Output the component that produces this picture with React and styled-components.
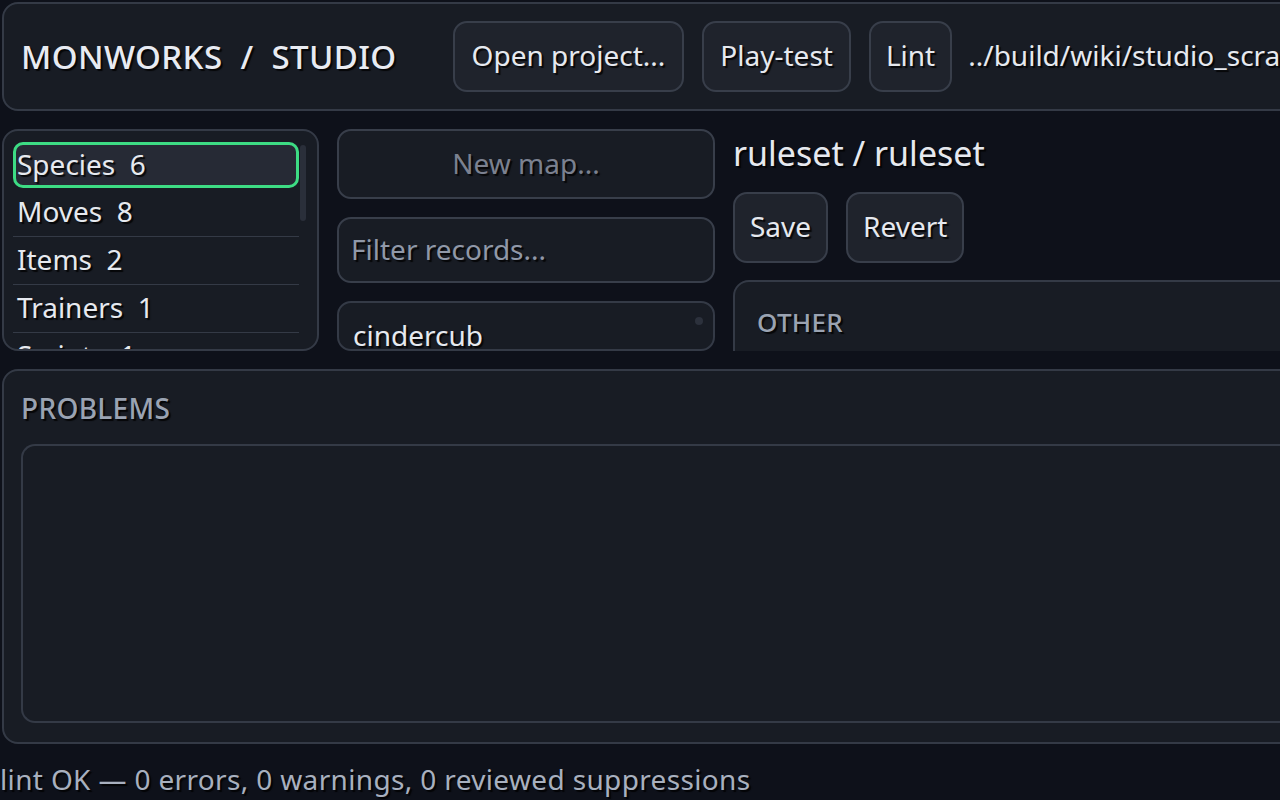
import React from 'react';
import styled, { createGlobalStyle } from 'styled-components';

const Global = createGlobalStyle`
  html, body {
    margin: 0;
    padding: 0;
    background: #0e111a;
    overflow: hidden;
  }
  body {
    font-family: "Noto Sans", "Open Sans", sans-serif;
    color: #e6e9ef;
  }
`;

const Page = styled.div`
  width: 1500px;
  height: 800px;
  display: flex;
  flex-direction: column;
  gap: 18px;
  padding: 2px 0 0 2px;
  box-sizing: border-box;
  text-shadow: 2px 2px 1px rgba(0, 0, 0, 0.8);
`;

const Panel = styled.div`
  background: #181c24;
  border: 2px solid #343a46;
  border-radius: 16px;
  box-sizing: border-box;
`;

const Header = styled(Panel)`
  height: 109px;
  flex: none;
  display: flex;
  align-items: center;
  gap: 18px;
  padding: 0 17px;
`;

const Title = styled.div`
  font-size: 33px;
  font-weight: 500;
  letter-spacing: 0.4px;
  white-space: pre;
  margin-right: 38px;
  color: #e8ebf2;
`;

const Button = styled.button`
  font-family: inherit;
  font-size: 28px;
  color: ${p => (p.disabled ? '#7b8190' : '#e6e9ef')};
  text-shadow: inherit;
  background: ${p => (p.disabled ? '#181c24' : '#1f232c')};
  border: 2px solid #383e4a;
  border-radius: 14px;
  height: ${p => p.h || 71}px;
  padding: 0 ${p => p.pad || 15}px 3px;
  cursor: pointer;
  box-sizing: border-box;
  white-space: nowrap;
`;

const PathText = styled.div`
  font-size: 28px;
  white-space: nowrap;
  margin-left: -2px;
  padding-bottom: 3px;
`;

const Main = styled.div`
  height: 222px;
  flex: none;
  display: flex;
  gap: 18px;
  overflow: hidden;
`;

const ListPanel = styled(Panel)`
  width: 317px;
  height: 222px;
  flex: none;
  position: relative;
  overflow: hidden;
  padding: 11px 18px 0 9px;
`;

const Category = styled.div`
  height: 48px;
  display: flex;
  align-items: center;
  font-size: 28px;
  white-space: pre;
  box-sizing: border-box;
  padding: 0 0 4px 4px;
  border-bottom: 1px solid #343a46;
  ${p =>
    p.selected &&
    `
    background: #262a35;
    border: 3px solid #3ddc84;
    border-radius: 10px;
    height: 46px;
    margin-bottom: 1px;
    padding: 0 0 3px 1px;
  `}
`;

const Scrollbar = styled.div`
  position: absolute;
  right: 11px;
  top: 14px;
  width: 6px;
  height: 76px;
  border-radius: 3px;
  background: #2a2f3a;
`;

const MiddleCol = styled.div`
  width: 378px;
  flex: none;
  display: flex;
  flex-direction: column;
  gap: 18px;
`;

const FilterInput = styled.input`
  font-family: inherit;
  font-size: 28px;
  height: 66px;
  background: #181c24;
  border: 2px solid #383e4a;
  border-radius: 14px;
  color: #e6e9ef;
  padding: 0 12px 2px;
  box-sizing: border-box;
  outline: none;
  text-shadow: 2px 2px 1px rgba(0, 0, 0, 0.8);
  &::placeholder {
    color: #9098a8;
  }
`;

const RecordList = styled(Panel)`
  flex: 1;
  border-radius: 14px;
  position: relative;
  overflow: hidden;
  padding: 12px 14px 0;
`;

const Record = styled.div`
  font-size: 28px;
  line-height: 40px;
`;

const Dot = styled.div`
  position: absolute;
  right: 10px;
  top: 14px;
  width: 8px;
  height: 8px;
  border-radius: 50%;
  background: #2c313c;
`;

const RightCol = styled.div`
  flex: 1;
  display: flex;
  flex-direction: column;
`;

const RecordTitle = styled.div`
  font-size: 34px;
  line-height: 48px;
  margin: 0 0 15px;
`;

const ButtonRow = styled.div`
  display: flex;
  gap: 18px;
  margin-bottom: 17px;
`;

const Section = styled(Panel)`
  padding: 22px 22px;
  height: 200px;
  flex: none;
`;

const SectionLabel = styled.div`
  font-size: ${p => p.size || 26}px;
  font-weight: 500;
  color: #9aa3b2;
  letter-spacing: 0.3px;
`;

const Problems = styled(Panel)`
  height: 375px;
  flex: none;
  padding: 18px 0 19px 17px;
  display: flex;
  flex-direction: column;
  gap: 17px;
`;

const ProblemsBox = styled.div`
  flex: 1;
  border: 2px solid #343a46;
  border-right: none;
  border-radius: 14px 0 0 14px;
  background: #181c24;
`;

const Status = styled.div`
  font-size: 28px;
  color: #a8b0bf;
  letter-spacing: 0.35px;
  margin: -3px 0 0 -2px;
  line-height: 40px;
`;

export default function App() {
  return (
    <>
      <Global />
      <Page>
        <Header>
          <Title>MONWORKS  /  STUDIO</Title>
          <Button pad={17}>Open project...</Button>
          <Button pad={16}>Play-test</Button>
          <Button pad={15}>Lint</Button>
          <PathText>../build/wiki/studio_scratch/project.mon</PathText>
        </Header>
        <Main>
          <ListPanel>
            <Category selected>Species  6</Category>
            <Category>Moves  8</Category>
            <Category>Items  2</Category>
            <Category>Trainers  1</Category>
            <Category>Scripts  1</Category>
            <Scrollbar />
          </ListPanel>
          <MiddleCol>
            <Button disabled h={70}>New map...</Button>
            <FilterInput placeholder="Filter records..." />
            <RecordList>
              <Record>cindercub</Record>
              <Dot />
            </RecordList>
          </MiddleCol>
          <RightCol>
            <RecordTitle>ruleset / ruleset</RecordTitle>
            <ButtonRow>
              <Button>Save</Button>
              <Button>Revert</Button>
            </ButtonRow>
            <Section>
              <SectionLabel>OTHER</SectionLabel>
            </Section>
          </RightCol>
        </Main>
        <Problems>
          <SectionLabel size={28}>PROBLEMS</SectionLabel>
          <ProblemsBox />
        </Problems>
        <Status>lint OK — 0 errors, 0 warnings, 0 reviewed suppressions</Status>
      </Page>
    </>
  );
}
